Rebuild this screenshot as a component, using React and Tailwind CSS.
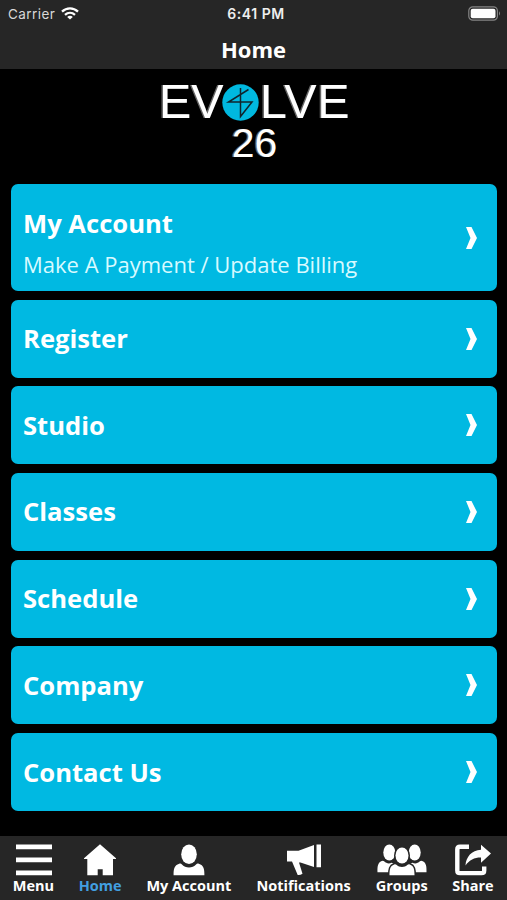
import React from 'react';

const cards = [
  { title: 'My Account', subtitle: 'Make A Payment / Update Billing' },
  { title: 'Register' },
  { title: 'Studio' },
  { title: 'Classes' },
  { title: 'Schedule' },
  { title: 'Company' },
  { title: 'Contact Us' },
];

const MenuIcon = () => (
  <svg width="36" height="32" viewBox="0 0 36 32" fill="currentColor">
    <path d="M0 .5h36v4.7H0zM0 13.6h36v4.6H0zM0 26.6h36v4.6H0z" />
  </svg>
);

const HomeIcon = () => (
  <svg width="32" height="32" viewBox="0 0 32 32" fill="currentColor">
    <path d="M16 .3 32 14.300V15h-3v16.300H18.700v-6h-5v6H3.300V15H0v-.7z" />
  </svg>
);

const UserIcon = () => (
  <svg width="32" height="32" viewBox="0 0 32 32" fill="currentColor">
    <ellipse cx="16" cy="10.3" rx="7.8" ry="9.8" />
    <path d="M.6 31.2c0-6.500.6-9.900 5.600-11.500 1.200-.4 1.900-.2 2.500.5 4 4.400 10.600 4.400 14.600 0 .6-.7 1.300-.9 2.500-.5 5 1.600 5.600 5 5.600 11.500z" />
  </svg>
);

const HornIcon = () => (
  <svg width="34" height="32" viewBox="0 0 34 32" fill="currentColor">
    <path d="M0 6.700h11.500L27 1v22l-13.500-4.500h-1.500l3.500 11.300q-2.500 1.700-4.800 1.200L5 17.500H0zM29.500.5H34V23.300h-4.500z" />
  </svg>
);

const GroupIcon = () => (
  <svg width="50" height="32" viewBox="0 0 50 32" fill="currentColor">
    <ellipse cx="12.300" cy="8.500" rx="6" ry="8" />
    <ellipse cx="37.700" cy="8.500" rx="6" ry="8" />
    <path d="M.5 28.300c-.2-6 .4-9.500 3.600-11.100 1.300-.7 2.200-.8 3 .1 2.400 2.400 5.100 2.600 7.600 1.400l3 1.300-2 8.300zM49.500 28.300c.2-6-.4-9.500-3.600-11.100-1.300-.7-2.200-.8-3 .1-2.400 2.400-5.100 2.600-7.600 1.400l-3 1.300 2 8.300z" />
    <g stroke="#262626" strokeWidth="3" className="[paint-order:stroke]">
      <path d="M12.500 31.300c0-6 .5-9.300 4.700-10.900 1-.4 1.600-.2 2.200.4 3 2.900 8.200 2.900 11.200 0 .6-.6 1.200-.8 2.200-.4 4.200 1.600 4.700 4.900 4.700 10.900z" />
      <ellipse cx="25" cy="11.500" rx="6.500" ry="8" />
    </g>
  </svg>
);

const ShareIcon = () => (
  <svg width="36" height="32" viewBox="0 0 36 32" fill="none">
    <path d="M14 2.700H5Q2.300 2.700 2.300 5.400v21Q2.300 29.100 5 29.100h21.500q2.700 0 2.700-2.700v-3.800" stroke="currentColor" strokeWidth="4.400" />
    <path d="M26 .8 36 9.500 26 18.700v-5.200c-6.500-.1-11.500 2.500-15.500 8C11 13 16.500 6.300 26 5.800z" fill="currentColor" />
  </svg>
);

const tabs = [
  { label: 'Menu', icon: MenuIcon, width: 'w-[41px]' },
  { label: 'Home', icon: HomeIcon, width: 'w-[43px]', active: true },
  { label: 'My Account', icon: UserIcon, width: 'w-[85px]' },
  { label: 'Notifications', icon: HornIcon, width: 'w-[95px]' },
  { label: 'Groups', icon: GroupIcon, width: 'w-[52px]' },
  { label: 'Share', icon: ShareIcon, width: 'w-[41px]' },
];

function StatusBar() {
  return (
    <div className="grid h-7 grid-cols-3 items-center pl-2 pr-[6px] font-['Inter',sans-serif] text-[13.5px]">
      <div className="flex items-center gap-[6px] text-[#d8d8d8]">
        <span className="tracking-[0.45px]">Carrier</span>
        <svg width="18" height="13" viewBox="0 0 18 13" fill="none" stroke="#fff" strokeWidth="2.300" className="mb-[2px]">
          <path d="M1 4.700c4.600-4.400 11.400-4.400 16 0M4 7.900c3-2.700 7-2.700 10 0" />
          <path d="M9 12.600 6.200 9.900c1.600-1.500 4-1.500 5.600 0z" fill="#fff" stroke="none" />
        </svg>
      </div>
      <div className="whitespace-nowrap pb-[2px] pl-[3px] text-center text-[14px] font-semibold tracking-[0.55px] text-[#eee]">6:41 PM</div>
      <div className="flex justify-end pb-[2px]">
        <svg width="33" height="15" viewBox="0 0 33 15">
          <rect x=".8" y=".8" width="28.600" height="13.400" rx="4" fill="none" stroke="#858585" strokeWidth="1.200" />
          <rect x="2.700" y="2.700" width="24.800" height="9.600" rx="2" fill="#fff" />
          <path d="M31 5.300q2 2.200 0 4.400z" fill="#858585" />
        </svg>
      </div>
    </div>
  );
}

function Logo() {
  return (
    <div className="flex flex-col items-center font-['Liberation_Sans',sans-serif] [text-shadow:-1.5px_0_#666]">
      <div className="flex h-[41px] items-center pl-[2px] text-[48.500px] leading-[54px]">
        <span className="w-[63px] whitespace-nowrap">EV</span>
        <svg width="37" height="37" viewBox="0 0 37 37" className="mt-[3px] shrink-0">
          <circle cx="18.500" cy="18.500" r="18.200" fill="#00b8df" />
          <path d="M18.500 4v28.500L30 18H6.500L26.500 5.500" fill="none" stroke="#10242d" strokeWidth="1.500" />
        </svg>
        <span className="w-[91px] whitespace-nowrap pl-[1px] tracking-[0.8px]">LVE</span>
      </div>
      <div className="pl-[2px] text-[41px] leading-[42px]">26</div>
    </div>
  );
}

function Card({ title, subtitle }) {
  return (
    <div className={`flex items-center justify-between rounded-[7px] bg-[#00b9e2] pl-3 pr-[20px] ${subtitle ? 'h-[106.500px]' : 'h-[78px]'}`}>
      <div className={subtitle ? 'pt-[13px]' : 'pt-px'}>
        <div className="text-[25.600px] font-bold leading-[34px]">{title}</div>
        {subtitle && <div className="mt-[6px] text-[22px] leading-[34px] text-[#d8faff]">{subtitle}</div>}
      </div>
      <svg width="11" height="22" viewBox="0 0 11 22" fill="currentColor">
        <path d="M0 0h5.500L11 11 5.500 22H0L4.500 11z" />
      </svg>
    </div>
  );
}

export default function App() {
  return (
    <div className="flex h-[900px] w-[507px] flex-col overflow-hidden bg-black font-['Open_Sans',sans-serif] text-white">
      <header className="h-[68.500px] bg-[#262626]">
        <StatusBar />
        <h1 className="pt-[5px] text-center text-[22px] font-bold leading-8">Home</h1>
      </header>

      <div className="h-[115.900px] pt-[12px]">
        <Logo />
      </div>

      <main className="flex flex-1 flex-col gap-[8.700px] pl-[11px] pr-[10px]">
        {cards.map((card) => (
          <Card key={card.title} {...card} />
        ))}
      </main>

      <nav className="flex h-16 gap-[24.700px] bg-[#262626] pl-[13px] pt-[7.500px]">
        {tabs.map(({ label, icon: Icon, width, active }) => (
          <div key={label} className={`flex shrink-0 flex-col items-center ${width}`}>
            <Icon />
            <span className={`whitespace-nowrap text-[14.500px] font-bold leading-5 ${active ? 'text-[#429fe0]' : ''}`}>{label}</span>
          </div>
        ))}
      </nav>
    </div>
  );
}
